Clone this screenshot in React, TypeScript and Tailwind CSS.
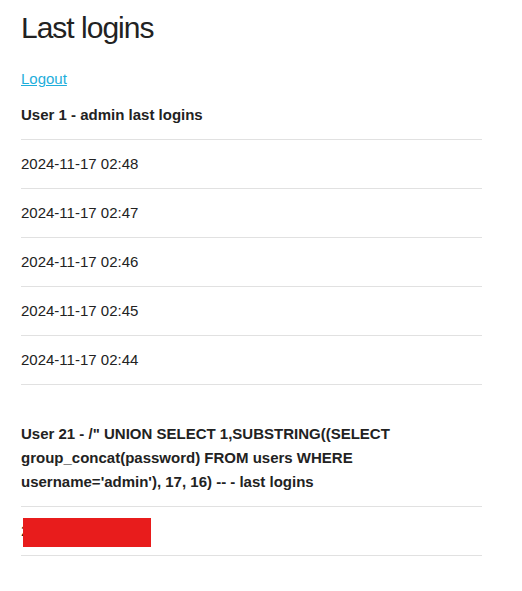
const logins = [
  "2024-11-17 02:48",
  "2024-11-17 02:47",
  "2024-11-17 02:46",
  "2024-11-17 02:45",
  "2024-11-17 02:44",
];

export default function App() {
  return (
    <div
      className="min-h-screen bg-white text-[#222] text-[15px] leading-[24px] pl-[21px] pt-[8px]"
      style={{ fontFamily: '"Liberation Sans", Arial, sans-serif' }}
    >
      <div className="w-[461px]">
        <h3 className="text-[30px] leading-[39px] tracking-[-1px] font-light mb-[20px]">
          Last logins
        </h3>

        <a href="#" className="text-[#1eaedb] underline block w-fit">
          Logout
        </a>

        {/* admin logins */}
        <table className="w-full border-collapse mb-[25px]">
          <thead>
            <tr>
              <th className="text-left font-bold py-[12px] border-b border-[#e1e1e1]">
                User 1 - admin last logins
              </th>
            </tr>
          </thead>
          <tbody>
            {logins.map((t) => (
              <tr key={t}>
                <td className="py-[12px] border-b border-[#e1e1e1]">{t}</td>
              </tr>
            ))}
          </tbody>
        </table>

        {/* injected user */}
        <table className="w-full border-collapse mb-[25px]">
          <thead>
            <tr>
              <th className="text-left font-bold py-[12px] border-b border-[#e1e1e1]">
                User 21 - /" UNION SELECT 1,SUBSTRING((SELECT group_concat(password) FROM users WHERE username='admin'), 17, 16) -- - last logins
              </th>
            </tr>
          </thead>
          <tbody>
            <tr>
              <td className="py-[12px] border-b border-[#e1e1e1]">
                <div className="relative">
                  <span>2f4a9c1e7b3d5a60</span>
                  <div className="absolute left-[2px] top-[-1px] w-[128px] h-[29px] bg-[#e81c1c]" />
                </div>
              </td>
            </tr>
          </tbody>
        </table>
      </div>
    </div>
  );
}
